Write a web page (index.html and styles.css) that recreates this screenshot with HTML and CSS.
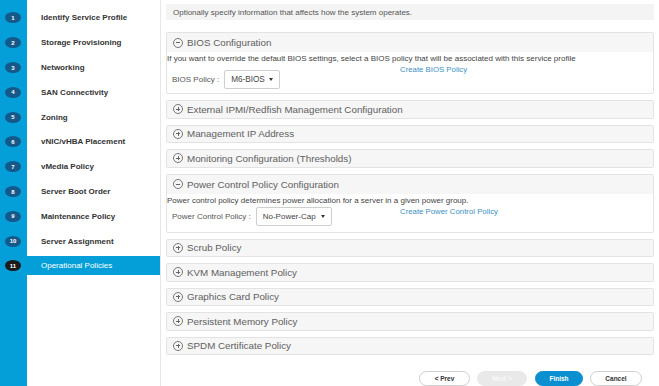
FILE: index.html
```html
<!DOCTYPE html>
<html>
<head>
<meta charset="utf-8">
<link rel="stylesheet" href="styles.css">
</head>
<body>
<div class="page">
  <nav class="steps">
    <div class="step"><span class="num">1</span><span class="label">Identify Service Profile</span></div>
    <div class="step"><span class="num">2</span><span class="label">Storage Provisioning</span></div>
    <div class="step"><span class="num">3</span><span class="label">Networking</span></div>
    <div class="step"><span class="num">4</span><span class="label">SAN Connectivity</span></div>
    <div class="step"><span class="num">5</span><span class="label">Zoning</span></div>
    <div class="step"><span class="num">6</span><span class="label">vNIC/vHBA Placement</span></div>
    <div class="step"><span class="num">7</span><span class="label">vMedia Policy</span></div>
    <div class="step"><span class="num">8</span><span class="label">Server Boot Order</span></div>
    <div class="step"><span class="num">9</span><span class="label">Maintenance Policy</span></div>
    <div class="step"><span class="num">10</span><span class="label">Server Assignment</span></div>
    <div class="step active"><span class="num">11</span><span class="label">Operational Policies</span></div>
  </nav>
  <main class="content">
    <div class="intro">Optionally specify information that affects how the system operates.</div>

    <section class="panel open bios">
      <div class="panel-head"><span class="toggle minus"></span>BIOS Configuration</div>
      <div class="panel-body">
        <div class="desc">If you want to override the default BIOS settings, select a BIOS policy that will be associated with this service profile</div>
        <div class="field-row">
          <div class="field"><span class="field-label">BIOS Policy :</span><span class="select">M6-BIOS<span class="caret"></span></span></div>
          <a class="create">Create BIOS Policy</a>
        </div>
      </div>
    </section>

    <section class="panel"><div class="panel-head"><span class="toggle plus"></span>External IPMI/Redfish Management Configuration</div></section>
    <section class="panel"><div class="panel-head"><span class="toggle plus"></span>Management IP Address</div></section>
    <section class="panel"><div class="panel-head"><span class="toggle plus"></span>Monitoring Configuration (Thresholds)</div></section>

    <section class="panel open power">
      <div class="panel-head"><span class="toggle minus"></span>Power Control Policy Configuration</div>
      <div class="panel-body">
        <div class="desc">Power control policy determines power allocation for a server in a given power group.</div>
        <div class="field-row">
          <div class="field"><span class="field-label">Power Control Policy :</span><span class="select wide">No-Power-Cap<span class="caret"></span></span></div>
          <a class="create">Create Power Control Policy</a>
        </div>
      </div>
    </section>

    <section class="panel"><div class="panel-head"><span class="toggle plus"></span>Scrub Policy</div></section>
    <section class="panel"><div class="panel-head"><span class="toggle plus"></span>KVM Management Policy</div></section>
    <section class="panel"><div class="panel-head"><span class="toggle plus"></span>Graphics Card Policy</div></section>
    <section class="panel"><div class="panel-head"><span class="toggle plus"></span>Persistent Memory Policy</div></section>
    <section class="panel"><div class="panel-head"><span class="toggle plus"></span>SPDM Certificate Policy</div></section>

    <div class="actions">
      <button class="btn prev">&lt; Prev</button>
      <button class="btn next disabled">Next &gt;</button>
      <button class="btn finish primary">Finish</button>
      <button class="btn cancel">Cancel</button>
    </div>
  </main>
</div>
</body>
</html>
```

FILE: styles.css
```css
* { box-sizing: border-box; }
html, body { margin: 0; padding: 0; }
body {
  width: 659px;
  height: 386px;
  overflow: hidden;
  font-family: "Liberation Sans", Arial, sans-serif;
  color: #444;
  background: #fff;
}
.page {
  display: flex;
  height: 386px;
}
.steps {
  width: 161px;
  flex: none;
  padding-top: 5.6px;
  background: linear-gradient(to right, #049fd9 0, #049fd9 27px, #fff 27px, #fff 160px, #e6e6e6 160px);
  display: flex;
  flex-direction: column;
}
.step {
  height: 24.8px;
  display: flex;
  align-items: center;
}
.num {
  width: 16px;
  height: 11px;
  margin-left: 5px;
  margin-right: 6px;
  border-radius: 50%;
  background: #15598a;
  color: #fff;
  font-size: 6px;
  font-weight: bold;
  display: flex;
  align-items: center;
  justify-content: center;
}
.label {
  width: 133px;
  height: 19px;
  padding-left: 14px;
  display: flex;
  align-items: center;
  font-size: 8px;
  font-weight: bold;
  color: #333;
}
.step.active .num { background: #1b1b1b; }
.step.active .label {
  background: #049fd9;
  color: #fff;
  font-weight: normal;
}
.content {
  flex: 1;
  padding: 4px 5px 0 5px;
  display: flex;
  flex-direction: column;
  gap: 6px;
}
.intro {
  height: 16px;
  background: #f4f4f4;
  padding-left: 7px;
  font-size: 8px;
  color: #555;
  display: flex;
  align-items: center;
  margin-bottom: 6px;
}
.panel {
  border: 1px solid #e3e3e3;
  border-radius: 2px;
  background: #fff;
}
.panel-head {
  height: 16.5px;
  background: #f6f6f6;
  display: flex;
  align-items: center;
  padding-left: 6px;
  font-size: 9.8px;
  color: #606060;
}
.panel.open .panel-head { height: 19px; }
.toggle {
  width: 10px;
  height: 10px;
  border: 1px solid #777;
  border-radius: 50%;
  margin-right: 4px;
  position: relative;
  flex: none;
}
.toggle::before, .toggle.plus::after {
  content: "";
  position: absolute;
  background: #666;
}
.toggle::before {
  left: 2px; right: 2px; top: 3.5px; height: 1px;
}
.toggle.plus::after {
  top: 2px; bottom: 2px; left: 3.5px; width: 1px;
}
.panel-body {
  font-size: 8px;
  color: #444;
}
.desc {
  padding-top: 2px;
  line-height: 10px;
}
.field-row {
  display: flex;
  align-items: flex-start;
}
.field {
  width: 233px;
  display: flex;
  align-items: center;
  padding-left: 5px;
}
.field-label {
  color: #555;
  margin-right: 5px;
}
.select {
  width: 56px;
  height: 19px;
  border: 1px solid #cfcfcf;
  border-radius: 2px;
  display: flex;
  align-items: center;
  padding-left: 6px;
  color: #444;
  font-size: 8.2px;
}
.select.wide { width: 76px; font-size: 8px; }
.caret {
  margin-left: auto;
  margin-right: 6px;
  width: 0; height: 0;
  border-left: 2.5px solid transparent;
  border-right: 2.5px solid transparent;
  border-top: 3.5px solid #333;
}
.create {
  color: #3d8fc6;
  font-size: 7.8px;
  line-height: 10px;
  margin-top: 1px;
}
.bios .field { padding-top: 6px; }
.bios .panel-body { padding-bottom: 4px; }
.power .field { padding-top: 1px; }
.power .panel-body { padding-bottom: 6px; }
.actions {
  margin-top: 9.5px;
  display: flex;
  justify-content: flex-end;
  padding-right: 12px;
}
.btn {
  height: 15px;
  border-radius: 8px;
  border: 1px solid #cfcfcf;
  background: #fff;
  font-family: "Liberation Sans", Arial, sans-serif;
  font-size: 6.5px;
  font-weight: bold;
  color: #333;
  padding: 0;
}
.btn.prev { width: 51px; margin-right: 7px; }
.btn.next { width: 50px; margin-right: 8px; }
.btn.finish { width: 48px; margin-right: 7px; }
.btn.cancel { width: 52px; }
.btn.disabled {
  background: #e9e9e9;
  border-color: #e9e9e9;
  color: #f8f8f8;
}
.btn.primary {
  background: #0b8fd0;
  border-color: #0b8fd0;
  color: #fff;
}
```
